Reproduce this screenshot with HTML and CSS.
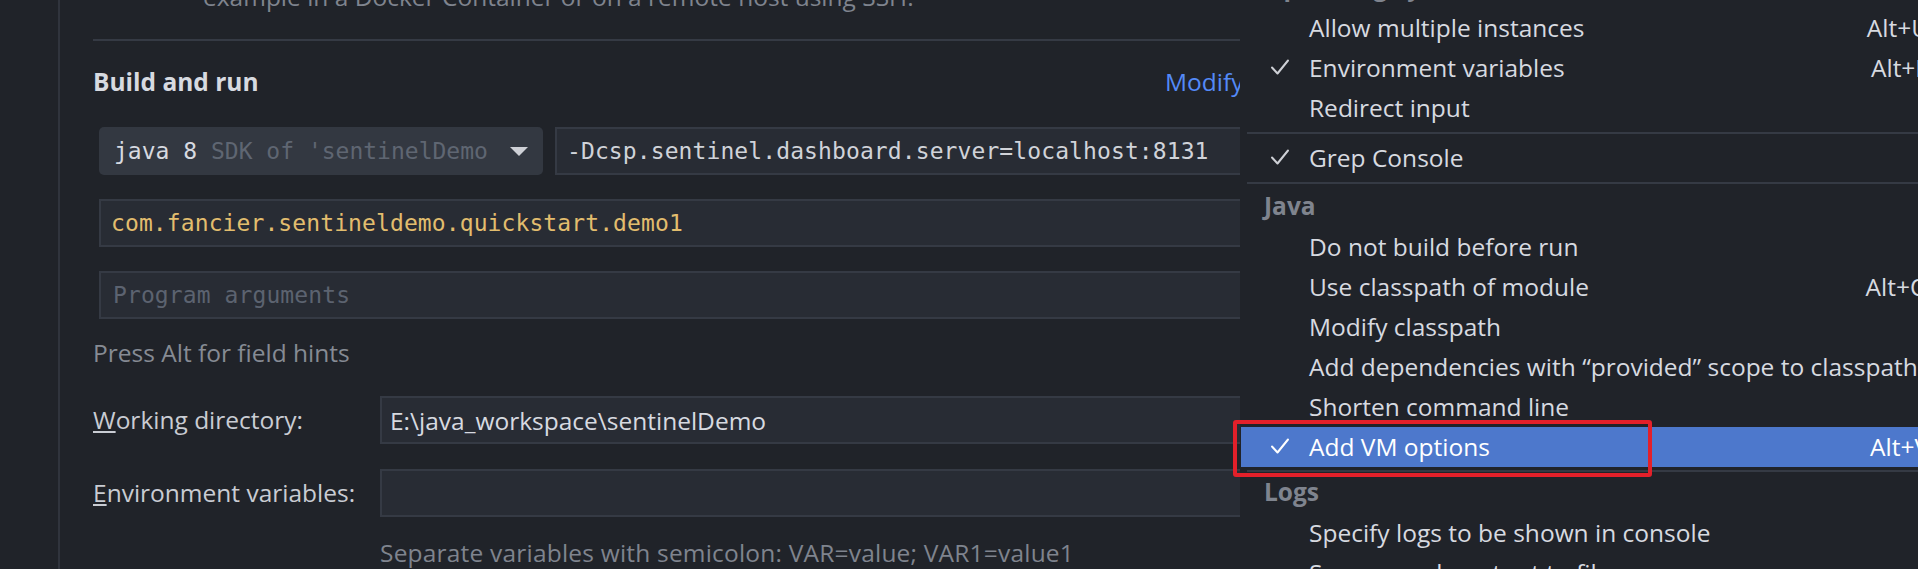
FILE: index.html
```html
<!DOCTYPE html>
<html>
<head>
<meta charset="utf-8">
<link rel="stylesheet" href="styles.css">
</head>
<body>
<div class="app">
  <aside class="sidebar"></aside>
  <main class="panel">
    <div class="desc">example in a Docker Container or on a remote host using SSH.</div>
    <div class="sep"></div>
    <div class="section-head">
      <span class="title">Build and run</span>
      <span class="link">Modify options</span>
    </div>
    <div class="fields">
      <div class="row">
        <div class="combo">
          <span class="combo-text"><span class="fg">java 8</span> <span class="dim">SDK of 'sentinelDemo'</span></span>
          <svg class="arrow" width="18" height="9" viewBox="0 0 18 9"><polygon points="0,0 18,0 9,9"/></svg>
        </div>
        <div class="field mono grow">-Dcsp.sentinel.dashboard.server=localhost:8131</div>
      </div>
      <div class="field mono main-class">com.fancier.sentineldemo.quickstart.demo1</div>
      <div class="field mono placeholder">Program arguments</div>
    </div>
    <div class="hint">Press Alt for field hints</div>
    <div class="form-row first">
      <label class="label"><u>W</u>orking directory:</label>
      <div class="field text grow">E:\java_workspace\sentinelDemo</div>
    </div>
    <div class="form-row second">
      <label class="label"><u>E</u>nvironment variables:</label>
      <div class="field text grow"></div>
    </div>
    <div class="note">Separate variables with semicolon: VAR=value; VAR1=value1</div>
  </main>

  <div class="menu">
    <div class="mh">Operating System</div>
    <div class="mi"><span class="ck"></span><span class="lbl">Allow multiple instances</span><span class="sc">Alt+U</span></div>
    <div class="mi"><span class="ck"><svg width="20" height="20" viewBox="0 0 20 20"><polyline points="2,10.5 7.5,16.5 18,3.5"/></svg></span><span class="lbl">Environment variables</span><span class="sc">Alt+E</span></div>
    <div class="mi"><span class="ck"></span><span class="lbl">Redirect input</span></div>
    <div class="msep"></div>
    <div class="mi"><span class="ck"><svg width="20" height="20" viewBox="0 0 20 20"><polyline points="2,10.5 7.5,16.5 18,3.5"/></svg></span><span class="lbl">Grep Console</span></div>
    <div class="msep"></div>
    <div class="mh">Java</div>
    <div class="mi"><span class="ck"></span><span class="lbl">Do not build before run</span></div>
    <div class="mi"><span class="ck"></span><span class="lbl">Use classpath of module</span><span class="sc">Alt+O</span></div>
    <div class="mi"><span class="ck"></span><span class="lbl">Modify classpath</span></div>
    <div class="mi"><span class="ck"></span><span class="lbl">Add dependencies with “provided” scope to classpath</span></div>
    <div class="mi"><span class="ck"></span><span class="lbl">Shorten command line</span></div>
    <div class="mi selected"><span class="ck"><svg width="20" height="20" viewBox="0 0 20 20"><polyline points="2,10.5 7.5,16.5 18,3.5"/></svg></span><span class="lbl">Add VM options</span><span class="sc">Alt+V</span></div>
    <div class="msep tight"></div>
    <div class="mh short">Logs</div>
    <div class="mi"><span class="ck"></span><span class="lbl">Specify logs to be shown in console</span></div>
    <div class="mi"><span class="ck"></span><span class="lbl">Save console output to file</span></div>
  </div>

  <div class="annot"></div>
</div>
</body>
</html>
```

FILE: styles.css
```css
html, body {
  margin: 0;
  padding: 0;
}

body {
  background: #202329;
  font-family: "Open Sans", "Noto Sans", sans-serif;
  font-size: 24.5px;
  color: #d7dae0;
  overflow: hidden;
}

.app {
  position: relative;
  display: flex;
  width: 1918px;
  height: 569px;
  overflow: hidden;
}

.sidebar {
  flex: none;
  width: 58px;
  border-right: 2px solid #30343d;
}

.panel {
  flex: none;
  width: 1300px;
  box-sizing: border-box;
  padding: 0 24px 0 33px;
}

.desc {
  margin: -20px 0 0 110px;
  line-height: 34px;
  color: #7f848e;
  white-space: nowrap;
}

.sep {
  margin-top: 25px;
  height: 2px;
  background: #353a44;
}

.section-head {
  display: flex;
  justify-content: space-between;
  align-items: center;
  height: 34px;
  margin-top: 24px;
  line-height: 34px;
}

.title {
  font-weight: 700;
  color: #d7dae0;
}

.link {
  color: #548af7;
}

.fields {
  margin: 28px 0 0 6px;
  display: flex;
  flex-direction: column;
  gap: 24px;
}

.row {
  display: flex;
  gap: 12px;
}

.combo {
  flex: none;
  width: 444px;
  height: 48px;
  box-sizing: border-box;
  display: flex;
  align-items: center;
  background: #333841;
  border-radius: 5px;
  padding: 0 15px 0 15px;
  font-family: "DejaVu Sans Mono", monospace;
  font-size: 23px;
}

.combo-text {
  flex: 1;
  overflow: hidden;
  white-space: nowrap;
  margin-right: 20px;
}

.fg {
  color: #d7dae0;
}

.dim {
  color: #5f6672;
}

.arrow {
  flex: none;
  fill: #ced0d6;
}

.field {
  height: 48px;
  box-sizing: border-box;
  display: flex;
  align-items: center;
  background: #282c34;
  border: 2px solid #353a44;
  padding: 0 10px;
  white-space: nowrap;
  overflow: hidden;
  color: #d0d3d9;
}

.grow {
  flex: 1;
}

.mono {
  font-family: "DejaVu Sans Mono", monospace;
  font-size: 23px;
  letter-spacing: 0.1px;
}

.main-class {
  color: #e2bd6e;
}

.placeholder {
  color: #5c6370;
  padding-left: 12px;
}

.text {
  padding-left: 8px;
  color: #d7dae0;
}

.hint {
  margin-top: 17px;
  line-height: 34px;
  color: #868b94;
}

.form-row {
  display: flex;
  align-items: center;
}

.form-row.first {
  margin-top: 26px;
}

.form-row.second {
  margin-top: 25px;
}

.label {
  flex: none;
  width: 287px;
  color: #c9ccd3;
  line-height: 34px;
}

.note {
  margin: 19px 0 0 287px;
  line-height: 34px;
  color: #7f848e;
  white-space: nowrap;
  letter-spacing: 0.2px;
}

/* popup menu overlay */
.menu {
  position: absolute;
  left: 1240px;
  top: -31px;
  width: 705px;
  height: 640px;
  background: #202329;
}

.mh {
  height: 39px;
  box-sizing: border-box;
  padding: 0 0 4px 24px;
  display: flex;
  align-items: center;
  font-weight: 700;
  color: #7f848e;
  white-space: nowrap;
}

.mh.short {
  height: 38px;
  padding-bottom: 5px;
}

.mi {
  height: 40px;
  box-sizing: border-box;
  display: flex;
  align-items: center;
  padding: 0 16px 2px 30px;
  white-space: nowrap;
  color: #d7dae0;
}

.mi.selected {
  margin-left: 1px;
  padding-left: 29px;
  background: #4d78cc;
  color: #ffffff;
}

.ck {
  flex: none;
  width: 39px;
  display: flex;
  align-items: center;
}

.ck svg {
  fill: none;
  stroke: #ced0d6;
  stroke-width: 2;
  stroke-linecap: round;
  stroke-linejoin: round;
}

.selected .ck svg {
  stroke: #ffffff;
}

.lbl {
  flex: none;
}

.sc {
  margin-left: auto;
  padding-left: 20px;
  color: #d7dae0;
}

.selected .sc {
  color: #ffffff;
}

.msep {
  height: 10px;
  margin-left: 7px;
  display: flex;
  align-items: center;
}

.msep.tight {
  height: 8px;
}

.msep::after {
  content: "";
  flex: 1;
  height: 2px;
  background: #353a44;
}

/* red annotation box */
.annot {
  position: absolute;
  left: 1233px;
  top: 420px;
  width: 419px;
  height: 57px;
  box-sizing: border-box;
  border: 4px solid #e3202a;
  border-radius: 3px;
}
```
